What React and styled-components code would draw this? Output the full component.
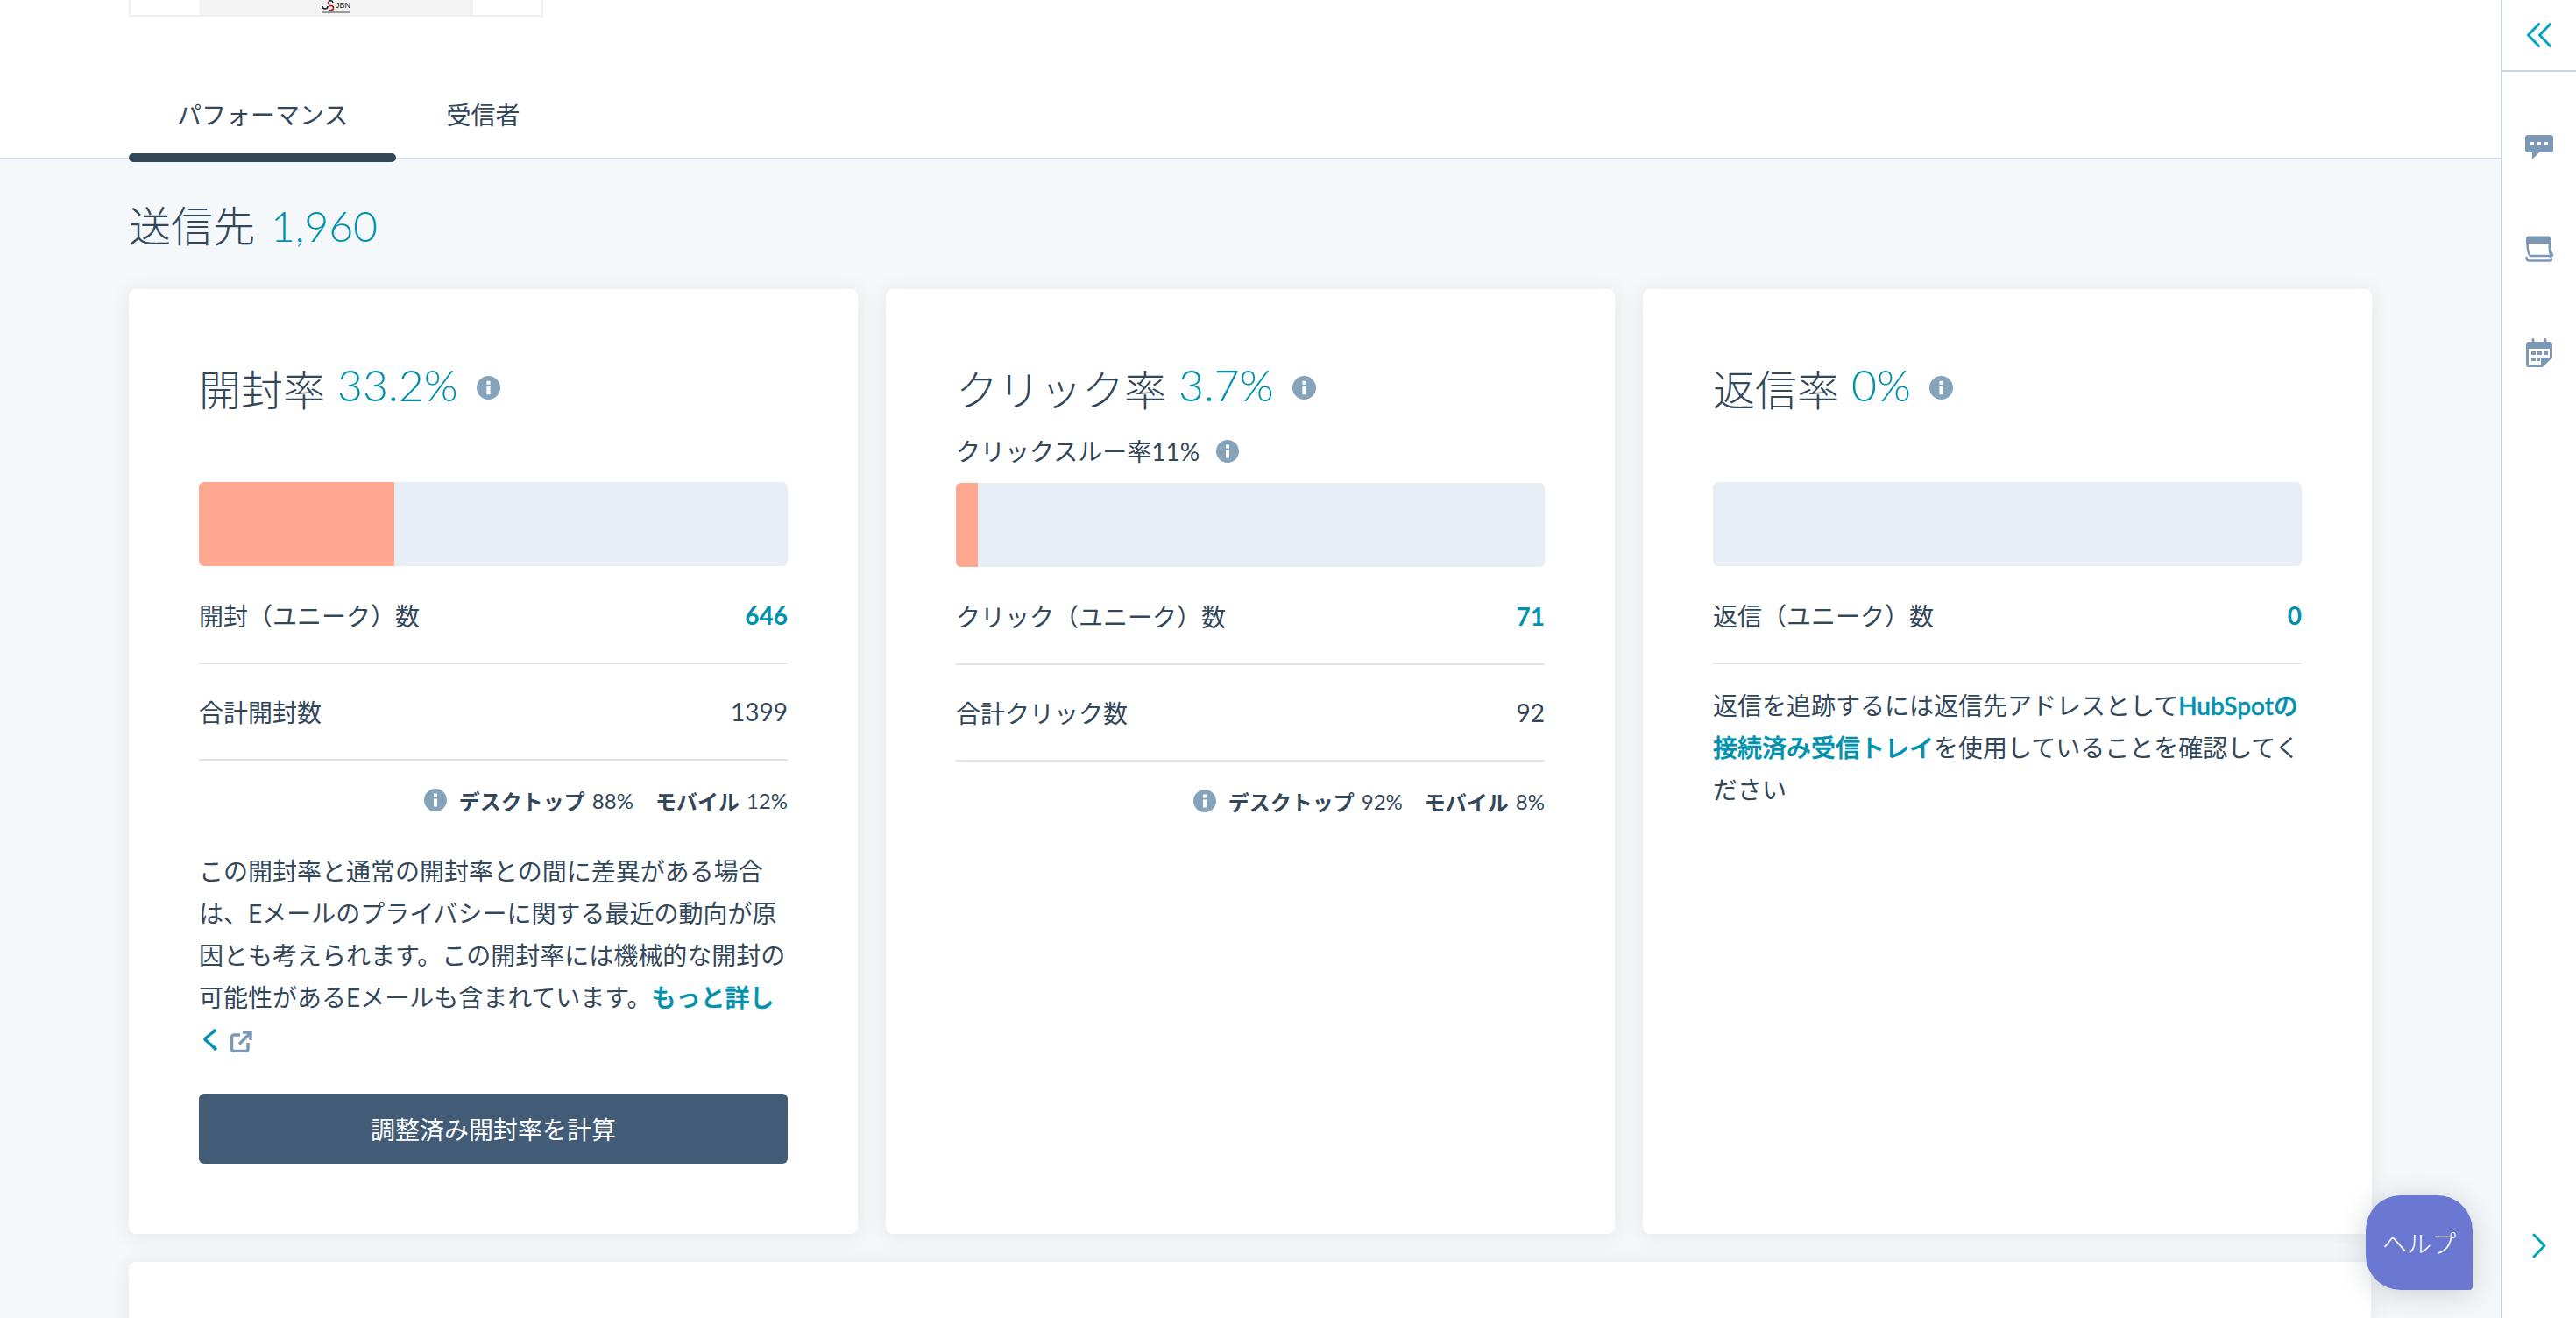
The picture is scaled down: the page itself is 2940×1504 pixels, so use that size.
import React from "react";
import styled, { createGlobalStyle } from "styled-components";

const GlobalStyle = createGlobalStyle`
  html, body {
    margin: 0;
    padding: 0;
    background: #fff;
  }
  * {
    box-sizing: border-box;
  }
`;

const Page = styled.div`
  display: grid;
  grid-template-columns: 1fr 86px;
  width: 2940px;
  height: 1504px;
  overflow: hidden;
  position: relative;
  color: #33475b;
  font-family: Lato, "Noto Sans CJK JP", sans-serif;
  font-size: 28px;
`;

const Main = styled.main`
  min-width: 0;
  height: 1504px;
  overflow: hidden;
  background: #f5f8fa;
`;

const TopArea = styled.div`
  background: #fff;
  border-bottom: 2px solid #cbd6e2;
  padding-left: 147px;
  height: 182px;
  display: flex;
  flex-direction: column;
  justify-content: space-between;
`;

const Thumb = styled.div`
  width: 473px;
  height: 19px;
  border: 2px solid #eaf0f6;
  border-top: 0;
  display: flex;
  justify-content: center;
`;

const ThumbInner = styled.div`
  width: 313px;
  height: 17px;
  background: #f3f3f3;
  display: flex;
  justify-content: center;
  overflow: hidden;
`;

const Logo = styled.div`
  width: 34px;
  height: 17px;
  display: flex;
  flex-direction: column;
  align-items: center;
`;

const LogoTop = styled.div`
  display: flex;
  align-items: center;
  gap: 1px;
  height: 13px;
`;

const LogoText = styled.span`
  font-family: "Liberation Sans", sans-serif;
  font-size: 9px;
  line-height: 9px;
  color: #222;
`;

const LogoTagline = styled.div`
  width: 33px;
  height: 2px;
  background: #9a9a9a;
`;

const Tabs = styled.div`
  display: flex;
  gap: 2px;
`;

const Tab = styled.div`
  position: relative;
  padding: 0 55px 31px;
  line-height: 40px;
  margin-bottom: -2px;

  ${(props) =>
    props.$active &&
    `
    &::after {
      content: "";
      position: absolute;
      left: 0;
      right: 0;
      bottom: -3px;
      height: 10px;
      border-radius: 5px;
      background: #33475b;
    }
  `}
`;

const Content = styled.div`
  padding: 44px 148px 0 147px;
`;

const Summary = styled.h2`
  margin: 0 0 40px;
  display: flex;
  font-size: 48px;
  line-height: 64px;
  font-weight: 300;
`;

const Teal = styled.span`
  color: #0091ae;
  font-weight: 300;
`;

const SummaryValue = styled(Teal)`
  margin-left: 18px;
`;

const CardGrid = styled.div`
  display: grid;
  grid-template-columns: repeat(3, 832px);
  gap: 32px;
`;

const Card = styled.section`
  height: 1078px;
  padding: 83px 80px 0;
  background: #fff;
  border-radius: 8px;
  box-shadow: 0 2px 24px rgba(45, 62, 80, 0.09);
`;

const WideCard = styled.section`
  margin-top: 32px;
  height: 400px;
  padding: 55px 51px 0;
  background: #fff;
  border-radius: 8px;
  box-shadow: 0 2px 24px rgba(45, 62, 80, 0.09);
  font-size: 44px;
  line-height: 60px;
  font-weight: 300;
`;

const TitleBlock = styled.div`
  height: ${(props) => props.$height || 137}px;
`;

const Title = styled.h3`
  margin: 0;
  display: flex;
  align-items: center;
  font-size: 48px;
  line-height: 64px;
  font-weight: 300;
`;

const TitleValue = styled(Teal)`
  margin-left: 14px;
  font-size: 50px;
  position: relative;
  top: -6px;
`;

const TitleInfo = styled.span`
  display: inline-flex;
  margin-left: 21px;
  position: relative;
  top: -3px;
`;

const SubLine = styled.div`
  display: flex;
  align-items: center;
  margin-top: 18px;
  line-height: 40px;
`;

const SubInfo = styled.span`
  display: inline-flex;
  margin-left: 19px;
`;

const Bar = styled.div`
  height: 96px;
  margin-bottom: 2px;
  border-radius: 6px;
  background: #e7eef5;
  overflow: hidden;
`;

const BarFill = styled.div`
  height: 100%;
  background: #ffa78f;
`;

const Row = styled.div`
  display: flex;
  align-items: center;
  justify-content: space-between;
  height: 110px;
  border-bottom: 2px solid #dfe3eb;
`;

const RowValue = styled.span`
  font-weight: ${(props) => (props.$unique ? 700 : 400)};
  color: ${(props) => (props.$unique ? "#0091ae" : "#33475b")};
`;

const Breakdown = styled.div`
  display: flex;
  align-items: center;
  justify-content: flex-end;
  height: 90px;
  font-size: 24px;
`;

const BreakdownIcon = styled.span`
  display: inline-flex;
  margin-right: 14px;
`;

const BreakdownLabel = styled.strong`
  font-weight: 700;
  margin-right: 8px;
`;

const BreakdownValue = styled.span`
  margin-right: ${(props) => (props.$last ? 0 : 25)}px;
`;

const Copy = styled.p`
  margin: ${(props) => (props.$compact ? "23px 0 0" : "12px 0 0")};
  line-height: 48px;
`;

const Link = styled.a`
  color: #0091ae;
  font-weight: 500;
  -webkit-text-stroke: 0.5px #0091ae;
  text-decoration: none;
`;

const ExternalIcon = styled.svg`
  width: 25px;
  height: 25px;
  margin-left: 8px;
  vertical-align: -4px;
`;

const CalcButton = styled.button`
  display: block;
  width: 100%;
  height: 80px;
  margin-top: 38px;
  border: 0;
  border-radius: 6px;
  background: #425b76;
  color: #fff;
  font: inherit;
  font-weight: 400;
`;

const Rail = styled.aside`
  display: flex;
  flex-direction: column;
  height: 1504px;
  background: #fff;
  border-left: 2px solid #cbd6e2;
`;

const RailTop = styled.div`
  height: 82px;
  display: flex;
  align-items: center;
  justify-content: center;
  border-bottom: 2px solid #cbd6e2;
`;

const RailIcons = styled.div`
  display: flex;
  flex-direction: column;
  align-items: center;
  gap: 87px;
  padding-top: 72px;
`;

const RailBottom = styled.div`
  margin-top: auto;
  padding-bottom: 68px;
  display: flex;
  justify-content: center;
`;

const HelpButton = styled.button`
  position: absolute;
  right: 118px;
  bottom: 32px;
  width: 122px;
  height: 108px;
  border: 0;
  border-radius: 40px 40px 4px 40px;
  background: #6a78d1;
  color: #fff;
  font: inherit;
  font-weight: 300;
  box-shadow: 0 4px 32px rgba(45, 62, 80, 0.22);
`;

const InfoIcon = ({ size = 26 }) => (
  <svg width={size} height={size} viewBox="0 0 26 26">
    <path
      fill="#86a3bc"
      fillRule="evenodd"
      d="M13 0a13 13 0 1 1 0 26a13 13 0 0 1 0-26ZM11 5.500v4h4v-4ZM11 11.500v9h4v-9Z"
    />
  </svg>
);

const Breakout = ({ desktop, mobile }) => (
  <Breakdown>
    <BreakdownIcon>
      <InfoIcon />
    </BreakdownIcon>
    <BreakdownLabel>デスクトップ</BreakdownLabel>
    <BreakdownValue>{desktop}</BreakdownValue>
    <BreakdownLabel>モバイル</BreakdownLabel>
    <BreakdownValue $last>{mobile}</BreakdownValue>
  </Breakdown>
);

const App = () => {
  return (
    <Page>
      <GlobalStyle />
      <Main>
        <TopArea>
          <Thumb>
            <ThumbInner>
              <Logo>
                <LogoTop>
                  <svg width="15" height="13" viewBox="0 0 15 13">
                    <path d="M8 1.500a3 3 0 0 1 5 1.500" fill="none" stroke="#222" strokeWidth="1.600" />
                    <path d="M1 7a3 3 0 0 0 6 0" fill="none" stroke="#222" strokeWidth="1.600" />
                    <path d="M8 6.500h3a2.500 2.500 0 0 1 0 5H8" fill="none" stroke="#a8182c" strokeWidth="1.600" />
                    <path d="M8 5a2.500 2.500 0 0 1 0-3" fill="none" stroke="#a8182c" strokeWidth="1.600" />
                  </svg>
                  <LogoText>JBN</LogoText>
                </LogoTop>
                <LogoTagline />
              </Logo>
            </ThumbInner>
          </Thumb>
          <Tabs>
            <Tab $active>パフォーマンス</Tab>
            <Tab>受信者</Tab>
          </Tabs>
        </TopArea>
        <Content>
          <Summary>
            送信先
            <SummaryValue>1,960</SummaryValue>
          </Summary>
          <CardGrid>
            <Card>
              <TitleBlock>
                <Title>
                  開封率
                  <TitleValue>33.2%</TitleValue>
                  <TitleInfo>
                    <InfoIcon size={27} />
                  </TitleInfo>
                </Title>
              </TitleBlock>
              <Bar>
                <BarFill style={{ width: "33.2%" }} />
              </Bar>
              <Row>
                <span>開封（ユニーク）数</span>
                <RowValue $unique>646</RowValue>
              </Row>
              <Row>
                <span>合計開封数</span>
                <RowValue>1399</RowValue>
              </Row>
              <Breakout desktop="88%" mobile="12%" />
              <Copy>
                この開封率と通常の開封率との間に差異がある場合は、Eメールのプライバシーに関する最近の動向が原因とも考えられます。この開封率には機械的な開封の可能性があるEメールも含まれています。
                <Link>もっと詳しく</Link>
                <ExternalIcon viewBox="0 0 25 25" fill="none" stroke="#7c98b6" strokeWidth="3.500">
                  <path d="M11 5H4a2.500 2.500 0 0 0-2.500 2.500V21A2.500 2.500 0 0 0 4 23.500h13.500A2.500 2.500 0 0 0 20 21v-7" />
                  <path d="M10 15.500L22 3.500M14 2h9v9" />
                </ExternalIcon>
              </Copy>
              <CalcButton>調整済み開封率を計算</CalcButton>
            </Card>
            <Card>
              <TitleBlock $height={138}>
                <Title>
                  クリック率
                  <TitleValue>3.7%</TitleValue>
                  <TitleInfo>
                    <InfoIcon size={27} />
                  </TitleInfo>
                </Title>
                <SubLine>
                  クリックスルー率11%
                  <SubInfo>
                    <InfoIcon />
                  </SubInfo>
                </SubLine>
              </TitleBlock>
              <Bar>
                <BarFill style={{ width: "3.7%" }} />
              </Bar>
              <Row>
                <span>クリック（ユニーク）数</span>
                <RowValue $unique>71</RowValue>
              </Row>
              <Row>
                <span>合計クリック数</span>
                <RowValue>92</RowValue>
              </Row>
              <Breakout desktop="92%" mobile="8%" />
            </Card>
            <Card>
              <TitleBlock>
                <Title>
                  返信率
                  <TitleValue>0%</TitleValue>
                  <TitleInfo>
                    <InfoIcon size={27} />
                  </TitleInfo>
                </Title>
              </TitleBlock>
              <Bar />
              <Row>
                <span>返信（ユニーク）数</span>
                <RowValue $unique>0</RowValue>
              </Row>
              <Copy $compact>
                返信を追跡するには返信先アドレスとして
                <Link>HubSpotの接続済み受信トレイ</Link>
                を使用していることを確認してください
              </Copy>
            </Card>
          </CardGrid>
          <WideCard>開封</WideCard>
        </Content>
      </Main>
      <Rail>
        <RailTop>
          <svg width="28" height="28" viewBox="0 0 28 28" fill="none" stroke="#00a4bd" strokeWidth="3" strokeLinecap="round" strokeLinejoin="round">
            <path d="M13.500 1.500L1.500 14l12 12.500M26.500 1.500L14.500 14l12 12.500" />
          </svg>
        </RailTop>
        <RailIcons>
          <svg width="32" height="28" viewBox="0 0 32 28">
            <path
              fill="#7c98b6"
              fillRule="evenodd"
              d="M3 0h26a3 3 0 0 1 3 3v14a3 3 0 0 1-3 3H16l-8 8v-8H3a3 3 0 0 1-3-3V3a3 3 0 0 1 3-3ZM6 8v4h4V8ZM14 8v4h4V8ZM22 8v4h4V8Z"
            />
          </svg>
          <svg width="32" height="30" viewBox="0 0 32 30" fill="none" stroke="#7c98b6" strokeWidth="2.500" strokeLinecap="round">
            <path d="M3 0.500h23a3 3 0 0 1 3 3V9H1V3.500a3 3 0 0 1 2-3Z" fill="#7c98b6" stroke="none" />
            <path d="M2.500 8c0 5 0 10 3 15h24c-2-4-2-10-1.500-15M29 17l2 5-2 2" />
            <path d="M1.500 25c0 2 1 3.500 3 3.500h24c1 0 1.500-.5 1.500-2" />
          </svg>
          <svg width="30" height="33" viewBox="0 0 30 33">
            <path
              fill="#7c98b6"
              fillRule="evenodd"
              d="M8 0a1.500 1.500 0 0 1 1.500 1.500V4h11V1.500a1.500 1.500 0 0 1 3 0V4H27a3 3 0 0 1 3 3v15l-11 11H3a3 3 0 0 1-3-3V7a3 3 0 0 1 3-3h3.500V1.500A1.500 1.500 0 0 1 8 0ZM3 12v18h14v-8h10V12ZM6 15h5v4H6ZM13 15h5v4h-5ZM20 15h5v4h-5ZM6 22h5v4H6ZM13 22h3v4h-3Z"
            />
          </svg>
        </RailIcons>
        <RailBottom>
          <svg width="16" height="29" viewBox="0 0 16 29" fill="none" stroke="#00a4bd" strokeWidth="3" strokeLinecap="round" strokeLinejoin="round">
            <path d="M2 2l12 12.500L2 27" />
          </svg>
        </RailBottom>
      </Rail>
      <HelpButton>ヘルプ</HelpButton>
    </Page>
  );
};

export default App;
